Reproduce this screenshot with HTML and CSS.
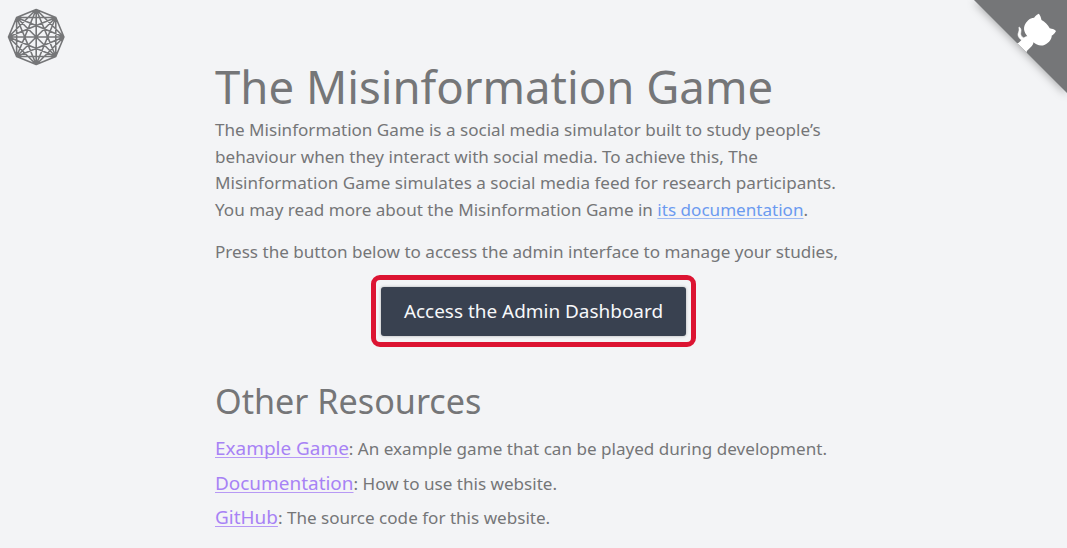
FILE: index.html
```html
<!DOCTYPE html>
<html lang="en">
<head>
<meta charset="utf-8">
<title>The Misinformation Game</title>
<link rel="stylesheet" href="styles.css">
</head>
<body>
<svg class="logo" viewBox="0 0 58 58" id="logo"></svg>
<a class="corner" aria-label="GitHub"><svg viewBox="0 0 250 250">
<path class="corner-bg" d="M0,0 L250,250 L250,0 Z"/>
<g transform="translate(-4.5 -5) scale(1.04)">
<path class="cat arm" d="M128.3,109.0 C113.8,99.7 119.0,89.6 119.0,89.6 C122.0,82.7 120.5,78.6 120.5,78.6 C119.2,72.0 123.4,76.3 123.4,76.3 C127.3,80.9 125.5,87.3 125.5,87.3 C122.9,97.6 130.6,101.9 134.4,103.2"/>
<path class="cat" d="M115.0,115.0 C114.9,115.1 118.7,116.5 119.8,115.4 L133.7,101.6 C136.9,99.2 139.9,98.4 142.2,98.6 C133.8,88.0 127.5,74.4 143.8,58.0 C148.5,53.4 154.0,51.2 159.7,51.0 C160.3,49.4 163.2,43.6 171.4,40.1 C171.4,40.1 176.1,42.5 178.8,56.2 C183.1,58.6 187.2,61.8 190.9,65.4 C194.5,69.0 197.7,73.2 200.1,77.6 C213.8,80.2 216.3,84.9 216.3,84.9 C212.7,93.1 206.9,96.0 205.4,96.6 C205.1,102.4 203.0,107.8 198.3,112.5 C181.9,128.9 168.3,122.5 157.7,114.1 C157.9,116.9 156.7,120.9 152.7,124.9 L141.0,136.5 C139.8,137.7 141.6,141.9 141.8,141.8 Z"/>
</g>
</svg></a>
<main class="page">
<h1>The Misinformation Game</h1>
<p>The Misinformation Game is a social media simulator built to study people’s behaviour when they interact with social media. To achieve this, The Misinformation Game simulates a social media feed for research participants. You may read more about the Misinformation Game in <a class="doc">its documentation</a>.</p>
<p class="prompt">Press the button below to access the admin interface to manage your studies,</p>
<div class="highlight"><button class="admin">Access the Admin Dashboard</button></div>
<h2>Other Resources</h2>
<ul class="resources">
<li><a>Example Game</a>: An example game that can be played during development.</li>
<li><a>Documentation</a>: How to use this website.</li>
<li><a>GitHub</a>: The source code for this website.</li>
</ul>
</main>
<script src="logo.js"></script>
</body>
</html>
```
FILE: styles.css
```css
* { box-sizing: border-box; margin: 0; padding: 0; }
body { background: #f3f4f6; color: #757678; font: 17.08px/26.6px "Noto Sans", sans-serif; height: 548px; overflow: hidden; }
.logo { position: absolute; left: 7px; top: 8px; width: 58px; height: 58px; fill: none; stroke: #757678; stroke-width: 1.6; stroke-linejoin: round; stroke-linecap: round; }
.corner { position: absolute; right: 0; top: 0; width: 93px; height: 93px; }
.corner svg { display: block; filter: drop-shadow(0 1px 5px rgba(0, 0, 0, .35)); overflow: visible; }
.corner-bg { fill: #757678; }
.cat { fill: #fff; }
.arm { stroke: #fff; stroke-width: 1.5; }
.page { width: 637px; margin-left: 215px; padding-top: 56px; }
h1 { font-size: 45.5px; line-height: 60px; font-weight: 400; white-space: nowrap; margin-bottom: 1.3px; }
.prompt { margin-top: 15px; white-space: nowrap; }
.doc { color: #6b9af0; text-decoration: underline 1px #9fbaf2; text-underline-offset: 2px; text-decoration-skip-ink: none; }
.highlight { width: 325px; height: 72px; margin: 9.7px 0 0 156px; border: 5px solid #dc1432; border-radius: 9px; padding: 7px 5px 6px; }
.admin { display: block; width: 305px; height: 49px; border: 0; border-radius: 3px; background: #394150; color: #f7f8fa; font: 18.96px "Noto Sans", sans-serif; box-shadow: 0 0 3px rgba(0, 0, 0, .3); }
h2 { font-size: 34.15px; line-height: 48px; font-weight: 400; margin-top: 30px; }
.resources { list-style: none; margin-top: 6px; }
.resources li { height: 34.6px; line-height: 34.6px; white-space: nowrap; }
.resources a { color: #a782f5; font-size: 18.96px; text-decoration: underline 1px #b799f5; text-underline-offset: 2px; text-decoration-skip-ink: none; }
```
FILE: logo.js
```javascript
const logo = document.getElementById("logo");
const points = Array.from({ length: 8 }, (_, i) => [29.2 + 27.7 * Math.sin(i * Math.PI / 4), 29 - 27.5 * Math.cos(i * Math.PI / 4)]);
let path = "";
for (let i = 0; i < 8; i++) for (let j = i + 1; j < 8; j++) path += `M${points[i]}L${points[j]}`;
const lines = document.createElementNS("http://www.w3.org/2000/svg", "path");
lines.setAttribute("d", path);
logo.append(lines);
```
